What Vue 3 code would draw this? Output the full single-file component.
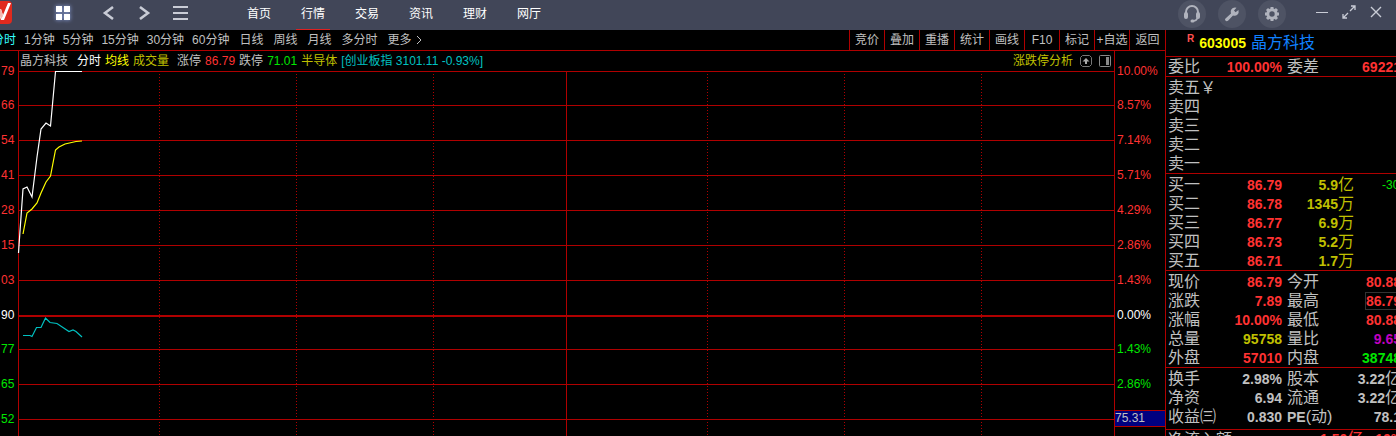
<script setup>
const nav = ['首页', '行情', '交易', '资讯', '理财', '网厅']
const activeNav = '行情'

const periods = ['分时', '1分钟', '5分钟', '15分钟', '30分钟', '60分钟', '日线', '周线', '月线', '多分时', '更多']
const tools = ['竞价', '叠加', '重播', '统计', '画线', 'F10', '标记', '+自选', '返回']

const axis = [
  { price: '79', pct: '10.00%', tone: 'up' },
  { price: '66', pct: '8.57%', tone: 'up' },
  { price: '54', pct: '7.14%', tone: 'up' },
  { price: '41', pct: '5.71%', tone: 'up' },
  { price: '28', pct: '4.29%', tone: 'up' },
  { price: '15', pct: '2.86%', tone: 'up' },
  { price: '03', pct: '1.43%', tone: 'up' },
  { price: '90', pct: '0.00%', tone: 'flat' },
  { price: '77', pct: '1.43%', tone: 'down' },
  { price: '65', pct: '2.86%', tone: 'down' },
  { price: '52', pct: '', tone: 'down' },
]

const levels = [0, 34, 69, 104, 139, 174, 209, 278, 313, 348]
const dotted = [140, 277, 414, 688, 825, 962].map((x) => (x / 1095) * 100 + '%')
const noon = (547 / 1095) * 100 + '%'

const asks = ['卖五', '卖四', '卖三', '卖二', '卖一']
const bids = [
  { name: '买一', price: '86.79', qty: '5.9', unit: '亿', diff: '-30' },
  { name: '买二', price: '86.78', qty: '1345', unit: '万', diff: '' },
  { name: '买三', price: '86.77', qty: '6.9', unit: '万', diff: '' },
  { name: '买四', price: '86.73', qty: '5.2', unit: '万', diff: '' },
  { name: '买五', price: '86.71', qty: '1.7', unit: '万', diff: '' },
]

const quotes = [
  { name: '现价', value: '86.79', tone: 'up' },
  { name: '今开', value: '80.88', tone: 'up' },
  { name: '涨跌', value: '7.89', tone: 'up' },
  { name: '最高', value: '86.79', tone: 'up', boxed: true },
  { name: '涨幅', value: '10.00%', tone: 'up' },
  { name: '最低', value: '80.88', tone: 'up' },
  { name: '总量', value: '95758', tone: 'gold' },
  { name: '量比', value: '9.65', tone: 'purple' },
  { name: '外盘', value: '57010', tone: 'up' },
  { name: '内盘', value: '38748', tone: 'down' },
]

const basics = [
  { name: '换手', value: '2.98%' },
  { name: '股本', value: '3.22', unit: '亿' },
  { name: '净资', value: '6.94' },
  { name: '流通', value: '3.22', unit: '亿' },
  { name: '收益㈢', value: '0.830' },
  { latin: 'PE', name: '(动)', value: '78.1' },
]
</script>

<template>
  <div class="app">
    <header class="topbar">
      <svg class="logo" width="12" height="24" viewBox="0 0 12 24" aria-hidden="true">
        <rect x="-12" y="1" width="24" height="23" rx="4" fill="#e02a1e" />
        <path d="M-3 9 L1 9 L3 15 L8 3 L11 3 L4 20 L1 20 Z" fill="#fff" />
        <path d="M-2 10 L1 19 L3 16 L1 9 Z" fill="#f2b8b0" />
      </svg>
      <div class="controls">
        <button class="ic home" aria-label="主页">
          <svg width="20" height="20" viewBox="0 0 20 20"><path d="M3 3h6v6H3zM11 3h6v6h-6zM3 11h6v6H3zM11 11h6v6h-6z" fill="#fff" /></svg>
        </button>
        <button class="ic" aria-label="后退">
          <svg width="14" height="16" viewBox="0 0 14 16"><path d="M12 2 L4 8 L12 14" fill="none" stroke="#c9ccd6" stroke-width="2.6" /></svg>
        </button>
        <button class="ic" aria-label="前进">
          <svg width="14" height="16" viewBox="0 0 14 16"><path d="M3 2 L11 8 L3 14" fill="none" stroke="#c9ccd6" stroke-width="2.6" /></svg>
        </button>
        <button class="ic" aria-label="菜单">
          <svg width="16" height="16" viewBox="0 0 16 16"><path d="M0 2h15M0 8h15M0 14h15" stroke="#c9ccd6" stroke-width="2" /></svg>
        </button>
      </div>
      <nav class="nav">
        <a v-for="n in nav" :key="n" href="#" :class="{ active: n === activeNav }">{{ n }}</a>
      </nav>
      <div class="round">
        <button aria-label="客服">
          <svg width="20" height="20" viewBox="0 0 20 20">
            <path d="M4 11 V8 A6 6 0 0 1 16 8 V11" fill="none" stroke="#b0b3bd" stroke-width="2" />
            <rect x="2" y="8" width="4" height="7" rx="2" fill="#b0b3bd" />
            <rect x="14" y="8" width="4" height="7" rx="2" fill="#b0b3bd" />
            <path d="M15.5 14 Q14.500 17 11 17" fill="none" stroke="#b0b3bd" stroke-width="1.500" />
            <rect x="8.500" y="15.500" width="4" height="3" rx="1.500" fill="#b0b3bd" />
          </svg>
        </button>
        <button aria-label="工具">
          <svg width="20" height="20" viewBox="0 0 20 20">
            <path d="M3.500 14.500 L9 9.500 Q8 6 10.500 4.300 Q12.500 3 14.500 3.800 L12 6.500 L13.500 8.300 L16.500 6 Q17.300 9 15.300 10.800 Q13.500 12.300 11 11.500 L6 16.800 Q4.500 17.600 3.400 16.600 Q2.500 15.500 3.500 14.500Z" fill="#b0b3bd" />
          </svg>
        </button>
        <button aria-label="设置">
          <svg width="20" height="20" viewBox="0 0 20 20">
            <circle cx="10" cy="10" r="4.200" fill="none" stroke="#b0b3bd" stroke-width="3" />
            <path d="M10 3v2.500M10 14.500V17M3 10h2.500M14.500 10H17M5 5l1.800 1.800M13.200 13.200L15 15M15 5l-1.800 1.800M6.800 13.200L5 15" stroke="#b0b3bd" stroke-width="3" />
          </svg>
        </button>
      </div>
      <div class="win">
        <button aria-label="最小化">
          <svg width="14" height="14" viewBox="0 0 14 14"><path d="M1 7.500h12" stroke="#c9ccd6" /></svg>
        </button>
        <button aria-label="最大化">
          <svg width="14" height="14" viewBox="0 0 14 14"><path d="M8 6 L13 1 M9 1h4v4 M6 8 L1 13 M1 9v4h4" fill="none" stroke="#c9ccd6" stroke-width="1.300" /></svg>
        </button>
        <button aria-label="关闭">
          <svg width="14" height="14" viewBox="0 0 14 14"><path d="M2 2l10 10M12 2L2 12" stroke="#c9ccd6" stroke-width="1.400" /></svg>
        </button>
      </div>
    </header>

    <div class="workspace">
      <main class="chart">
        <div class="toolbar">
          <div class="periods">
            <button v-for="(p, i) in periods" :key="p" :class="{ on: i === 0 }">{{ p }}</button>
            <svg width="6" height="10" viewBox="0 0 6 10" aria-hidden="true"><path d="M1 1 L5 5 L1 9" fill="none" stroke="#c0c0c0" /></svg>
          </div>
          <div class="tools">
            <button v-for="t in tools" :key="t">{{ t }}</button>
          </div>
        </div>

        <div class="body">
          <div class="scale left">
            <span v-for="a in axis" :key="a.price" :class="a.tone">{{ a.price }}</span>
          </div>

          <div class="center">
            <div class="info">
              <span class="stock">晶方科技</span>
              <span class="flat">分时</span>
              <span class="yellow">均线</span>
              <span class="gold vol">成交量</span>
              <span>涨停</span>
              <span class="up">86.79</span>
              <span>跌停</span>
              <span class="down">71.01</span>
              <span class="gold">半导体</span>
              <span class="teal">[创业板指 3101.11 -0.93%]</span>
              <span class="gold analysis">涨跌停分析</span>
              <button class="ic" aria-label="展开">
                <svg width="12" height="12" viewBox="0 0 12 12"><path d="M2.500 .5h7l2 2v7l-2 2h-7l-2-2v-7z" fill="none" stroke="#777" /><path d="M6 3L9.500 6.500H7V9H5V6.500H2.500z" fill="#aaa" /></svg>
              </button>
              <button class="ic" aria-label="侧栏">
                <svg width="12" height="12" viewBox="0 0 12 12"><rect x=".5" y=".5" width="11" height="11" rx="1" fill="none" stroke="#888" /><path d="M7 2h3v8H7z" fill="#888" /></svg>
              </button>
            </div>
            <svg class="plot" aria-label="分时走势">
              <g stroke="#b00000" shape-rendering="crispEdges">
                <line v-for="y in levels" :key="y" x1="0" x2="100%" :y1="y + 0.5" :y2="y + 0.5" />
                <line x1="0" x2="100%" y1="245" y2="245" stroke-width="2" />
                <line v-for="x in dotted" :key="x" :x1="x" :x2="x" y1="3" y2="100%" stroke-dasharray="1 2" />
                <line :x1="noon" :x2="noon" y1="0" y2="100%" />
              </g>
              <g fill="none" stroke-width="1.200">
                <polyline stroke="#fff" points="-0.5,182 1,160 4,118 8,116 13,126 18,86 22,58 27,52 31.500,55 36.500,0.500 63,0.500" />
                <polyline stroke="#ff0" points="4,163 8,142 13,138 18,132 22,122 27,111 31.500,105 36.500,79 40,76 46,73 57,70.500 63,70" />
                <polyline stroke="#00c0c0" points="4,264.500 11,264.500 13,265.500 17.500,256.500 22,256.500 26.500,247 31,251.500 38,252.500 50,260.500 54,259 57,260.500 63,266" />
              </g>
            </svg>
          </div>

          <div class="scale right">
            <span v-for="a in axis" :key="a.price" :class="a.tone">
              <template v-if="a.pct">{{ a.pct }}</template>
              <b v-else class="cursor">75.31</b>
            </span>
          </div>
        </div>
      </main>

      <aside class="panel">
        <h1 class="title"><sup>R</sup><span class="code">603005</span><span class="name">晶方科技</span></h1>
        <dl class="pairs ratio">
          <div><dt>委比</dt><dd class="up">100.00%</dd></div>
          <div><dt>委差</dt><dd class="up">69221</dd></div>
        </dl>
        <table class="book">
          <tbody>
            <tr v-for="(a, i) in asks" :key="a">
              <th scope="row">{{ a }}<template v-if="i === 0">&#xFFE5;</template></th>
              <td></td><td></td><td></td>
            </tr>
          </tbody>
        </table>
        <table class="book">
          <tbody>
            <tr v-for="b in bids" :key="b.name">
              <th scope="row">{{ b.name }}</th>
              <td class="up">{{ b.price }}</td>
              <td class="gold">{{ b.qty }}<i>{{ b.unit }}</i></td>
              <td class="diff">{{ b.diff }}</td>
            </tr>
          </tbody>
        </table>
        <dl class="pairs quotes">
          <div v-for="q in quotes" :key="q.name">
            <dt>{{ q.name }}</dt>
            <dd :class="[q.tone, { boxed: q.boxed }]">{{ q.value }}</dd>
          </div>
        </dl>
        <dl class="pairs basics">
          <div v-for="q in basics" :key="q.name">
            <dt><b v-if="q.latin">{{ q.latin }}</b>{{ q.name }}</dt>
            <dd>{{ q.value }}<i v-if="q.unit">{{ q.unit }}</i></dd>
          </div>
        </dl>
        <div class="flow">
          <span>净流入额</span>
          <b class="up">1.50<i>亿</i></b>
          <b class="up">10%</b>
        </div>
      </aside>
    </div>
  </div>
</template>

<style>
body {
  margin: 0;
  background: #000;
}
</style>

<style scoped>
.app {
  display: flex;
  flex-direction: column;
  height: 100vh;
  overflow: hidden;
  background: #000;
  color: #c0c0c0;
  font: 12px/16px "Liberation Sans", "Noto Sans CJK SC", sans-serif;
  white-space: nowrap;
}
button {
  margin: 0;
  padding: 0;
  border: 0;
  background: none;
  color: inherit;
  font: inherit;
}
svg { display: block; }
i { font-style: normal; }
.up { color: #ff3232; }
.down { color: #00e600; }
.flat { color: #fff; }
.gold { color: #c0c000; }
.yellow { color: #ff0; }
.teal { color: #00c0c0; }
.purple { color: #c000c0; }

.topbar {
  display: flex;
  flex: none;
  height: 30px;
  background: #414658;
}
.controls {
  display: flex;
  align-items: center;
  height: 26px;
  margin-left: 41px;
}
.controls .ic + .ic { margin-left: 22px; }
.controls .home + .ic { margin-left: 28px; }
.home { filter: drop-shadow(0 0 2px #8fa4e0); }
.nav {
  display: flex;
  gap: 20px;
  margin-left: 53px;
}
.nav a {
  box-sizing: border-box;
  width: 34px;
  height: 30px;
  border-bottom: 1px solid transparent;
  color: #fff;
  line-height: 28px;
  text-align: center;
  text-decoration: none;
}
.nav a.active { border-color: #e02020; }
.round {
  display: flex;
  gap: 12px;
  margin-left: auto;
}
.round button {
  display: grid;
  place-items: center;
  width: 28px;
  height: 28px;
  border-radius: 50%;
  background: #4e5364;
}
.win {
  display: flex;
  gap: 13px;
  align-items: center;
  height: 24px;
  margin: 0 13px 0 29px;
}

.workspace {
  display: flex;
  flex: 1;
  min-height: 0;
}
.chart {
  display: flex;
  flex: 1;
  flex-direction: column;
  min-width: 0;
}
.toolbar {
  display: flex;
  justify-content: space-between;
  height: 20px;
  border-bottom: 1px solid #b00000;
}
.periods {
  display: flex;
  gap: 8px;
  align-items: center;
  margin-left: -8px;
}
.periods button:nth-child(n + 7) { margin-left: 2px; }
.periods svg { margin-left: -4px; }
.on { color: #3ff; }
.tools { display: flex; }
.tools button {
  box-sizing: border-box;
  width: 35px;
  border-left: 1px solid #b00000;
  text-align: center;
}
.tools button:last-child { width: 36px; }
.body {
  display: flex;
  flex: 1;
  min-height: 0;
}
.scale {
  display: flex;
  flex: none;
  flex-direction: column;
  box-sizing: border-box;
  padding-top: 3px;
}
.scale > span {
  flex: none;
  height: 35px;
  line-height: 35px;
}
.scale > span.flat,
.scale > span:first-child {
  height: 34px;
  line-height: 34px;
}
.left {
  width: 18px;
  padding-left: 1px;
}
.right {
  width: 51px;
  border-left: 1px solid #b00000;
}
.right > span { padding-left: 2px; }
.cursor {
  display: block;
  margin: 8px 0 0 -2px;
  border: solid #b00000;
  border-width: 1px 0;
  background: #000080;
  color: #c0c0c0;
  font-weight: 400;
  line-height: 15px;
}
.center {
  display: flex;
  flex: 1;
  flex-direction: column;
  min-width: 0;
  border-left: 1px solid #b00000;
}
.info {
  display: flex;
  flex: none;
  gap: 4px;
  align-items: center;
  height: 20px;
  padding: 0 3px 0 1px;
}
.stock { margin-right: 5px; }
.vol { margin-right: 4px; }
.analysis { margin: 0 3px 0 auto; }
.info .ic + .ic { margin-left: 3px; }
.plot {
  flex: 1;
  width: 100%;
  min-height: 0;
  overflow: visible;
}

.panel {
  flex: none;
  box-sizing: border-box;
  width: 231px;
  border-left: 1px solid #b00000;
  overflow: hidden;
  font-size: 16px;
}
.title {
  display: flex;
  align-items: center;
  height: 26px;
  margin: 0;
  padding-left: 21px;
  font-size: 14px;
}
.title sup {
  margin: 0 5px 8px 0;
  color: #ff5050;
  font-size: 10px;
  line-height: 10px;
  vertical-align: baseline;
}
.code { color: #ff0; }
.name {
  margin-left: 5px;
  color: #1080ff;
  font-size: 16px;
  font-weight: 400;
}
.pairs {
  display: grid;
  grid-template-columns: 114px 114px;
  column-gap: 5px;
  margin: 0;
  padding: 1px 2px 0;
  border-top: 1px solid #b00000;
}
.pairs.ratio { padding-top: 0; }
.pairs.basics { padding-bottom: 3px; }
.pairs > div {
  display: flex;
  align-items: center;
  justify-content: space-between;
  height: 19px;
}
.pairs dd {
  margin: 0;
  font-size: 14px;
  font-weight: 700;
}
.pairs b {
  font-size: 14px;
  font-weight: 700;
}
.pairs i,
.book i,
.flow i {
  font-size: 16px;
  font-weight: 400;
  line-height: 1;
}
.boxed { outline: 1px solid #333; }
.book {
  width: 230px;
  padding: 1px 0 0 2px;
  border-top: 1px solid #b00000;
  border-spacing: 0;
  table-layout: fixed;
}
.book th,
.book td {
  height: 19px;
  padding: 0;
  line-height: 16px;
}
.book th {
  width: 50px;
  font-weight: 400;
  text-align: left;
}
.book td {
  width: 64px;
  font-size: 14px;
  font-weight: 700;
  text-align: right;
}
.book td:nth-child(3) { width: 72px; }
.book .diff {
  width: auto;
  padding-left: 28px;
  color: #00e600;
  font-size: 12px;
  font-weight: 400;
  text-align: left;
}
.flow {
  display: flex;
  padding-left: 2px;
  border-top: 1px solid #b00000;
  line-height: 19px;
}
.flow b {
  font-size: 14px;
  font-weight: 700;
}
.flow b:nth-child(2) { margin: 0 12px 0 88px; }
</style>
